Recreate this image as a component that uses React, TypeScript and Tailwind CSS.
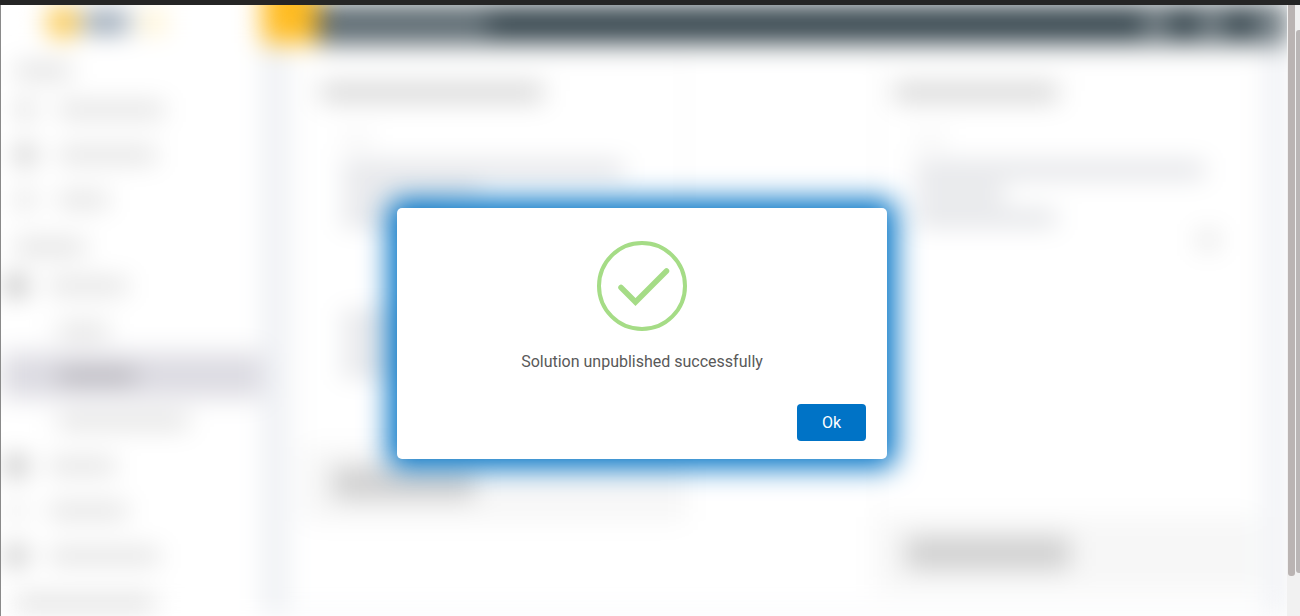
import React from 'react'

type NavRow = {
  kind: 'heading' | 'item' | 'group' | 'child'
  width: string
  icon?: string
  active?: boolean
}

const navRows: NavRow[] = [
  { kind: 'heading', width: 'w-14' },
  { kind: 'item', width: 'w-[106px]', icon: 'bg-[#cecece]' },
  { kind: 'item', width: 'w-[98px]', icon: 'bg-[#ababab]' },
  { kind: 'item', width: 'w-[50px]', icon: 'bg-[#d6d6d6]' },
  { kind: 'heading', width: 'w-[70px]' },
  { kind: 'group', width: 'w-[78px]', icon: 'bg-[#858585]' },
  { kind: 'child', width: 'w-[50px]' },
  { kind: 'child', width: 'w-[78px]', active: true },
  { kind: 'child', width: 'w-[130px]' },
  { kind: 'group', width: 'w-[66px]', icon: 'bg-[#8c8c8c]' },
  { kind: 'group', width: 'w-[78px]', icon: 'bg-[#e4e4e4]' },
  { kind: 'group', width: 'w-[110px]', icon: 'bg-[#9a9a9a]' },
  { kind: 'heading', width: 'w-[140px]' },
]

const SidebarRow: React.FC<{ row: NavRow }> = ({ row }) => {
  if (row.kind === 'heading') {
    return (
      <div className="flex h-[41px] shrink-0 items-center pt-2 pl-[14px]">
        <div className={`h-3 bg-[#d4d4d4] ${row.width}`} />
      </div>
    )
  }

  return (
    <div
      className={`flex h-[45px] shrink-0 items-center gap-6 ${row.active ? 'bg-[#dcdbe2]' : ''} ${
        row.kind === 'group' ? 'pl-[6px]' : 'pl-[15px]'
      }`}
    >
      <div className={`h-[18px] w-[18px] rounded-full ${row.icon ?? ''}`} />
      <div className={`h-3 ${row.active ? 'bg-[#aba9af]' : 'bg-[#d6d6d6]'} ${row.width}`} />
    </div>
  )
}

const Sidebar: React.FC = () => (
  <aside className="flex w-[261px] shrink-0 flex-col bg-white">
    {/* Logo */}
    <div className="flex h-[38px] shrink-0 items-center pb-1 pl-[46px]">
      <div className="h-8 w-8 rounded-full bg-[#fbc33c]" />
      <div className="ml-1 h-5 w-[46px] bg-[#8495a7]" />
      <div className="ml-3 h-5 w-6 bg-[#fff0c4]" />
    </div>
    <nav className="flex flex-col pt-[3px]">
      {navRows.map((row, i) => (
        <SidebarRow key={i} row={row} />
      ))}
    </nav>
  </aside>
)

const TopBar: React.FC = () => (
  <header className="flex h-[38px] shrink-0 items-center bg-[#34444c]">
    <div className="-mt-8 h-[70px] w-14 shrink-0 bg-[#ffbc22]" />
    <div className="ml-1 h-5 w-[166px] bg-[#6b787f]" />
    <div className="ml-auto flex items-center gap-[34px] pr-1">
      <div className="h-5 w-[22px] bg-[#8d979d]" />
      <div className="h-5 w-[22px] bg-[#8d979d]" />
      <div className="h-5 w-[26px] bg-[#8d979d]" />
    </div>
  </header>
)

type CardProps = {
  title: string
  button: string
  height: string
  children: React.ReactNode
}

const Card: React.FC<CardProps> = ({ title, button, height, children }) => (
  <section className={`flex flex-col self-start border border-[#e8e8e8] bg-white ${height}`}>
    <div className="px-4 pt-[21px]">
      <div className={`h-[15px] bg-[#cbcbcb] ${title}`} />
    </div>
    <div className="flex flex-1 flex-col gap-3 px-[38px] pt-[34px]">{children}</div>
    <div className="flex h-[72px] shrink-0 items-center bg-[#f7f7f7] px-7">
      <div className={`h-8 bg-[#cfcfcf] ${button}`} />
    </div>
  </section>
)

const Line: React.FC<{ width: string }> = ({ width }) => (
  <div className={`h-3 bg-[#d4d6db] ${width}`} />
)

const Content: React.FC = () => (
  <main className="flex min-h-0 flex-1 pr-5 pb-1 pl-[26px]">
    <div className="grid flex-1 grid-cols-2 gap-48 bg-white pt-5 pr-[10px] pl-4">
      <Card title="w-[222px]" button="w-[142px]" height="h-[457px]">
        <div className="mb-[6px] h-3 w-7 bg-[#f1f1f1]" />
        <Line width="w-[280px]" />
        <Line width="w-[136px]" />
        <Line width="w-[100px]" />
        <div className="h-[66px]" />
        <Line width="w-[100px]" />
        <Line width="w-[100px]" />
        <Line width="w-[100px]" />
      </Card>
      <Card title="w-[164px]" button="w-[164px]" height="h-[527px]">
        <div className="mb-[6px] h-3 w-7 bg-[#f1f1f1]" />
        <Line width="w-[288px]" />
        <Line width="w-[88px]" />
        <Line width="w-[140px]" />
        <div className="-mt-1 h-4 w-5 self-end bg-[#dfdfdf]" />
      </Card>
    </div>
  </main>
)

const SuccessDialog: React.FC = () => (
  <div
    role="dialog"
    aria-modal="true"
    aria-labelledby="dialog-message"
    className="flex w-[490px] max-w-full flex-col rounded-[5px] bg-white px-[21px] pt-[33px] pb-[18px] shadow-[0_0_28px_9px_#0073c6]"
  >
    <svg viewBox="0 0 90 90" className="h-[90px] w-[90px] self-center" fill="none" stroke="#a5dc86" aria-hidden="true">
      <circle cx="45" cy="45" r="43" strokeWidth="4" />
      <path d="M24 46.5 38.5 61 69.5 30" strokeWidth="5.5" strokeLinecap="round" />
    </svg>
    <p id="dialog-message" className="mt-[19px] text-center text-base leading-6 text-[#595959]">
      Solution unpublished successfully
    </p>
    <button
      type="button"
      className="mt-[30px] h-[37px] w-[69px] self-end rounded-[4px] bg-[#0073c6] text-base text-white"
    >
      Ok
    </button>
  </div>
)

export default function App() {
  return (
    <div className="flex h-screen flex-col overflow-hidden bg-white font-['Roboto',sans-serif]">
      <div className="h-[5px] shrink-0 bg-[#252525]" />
      <div className="flex min-h-0 flex-1">
        <div className="relative min-w-0 flex-1 overflow-hidden border-l border-[#8a8a8a]">
          {/* Page behind the dialog */}
          <div className="flex h-full bg-[#eef0f4] blur-[13px]" aria-hidden="true">
            <Sidebar />
            <div className="flex min-w-0 flex-1 flex-col">
              <TopBar />
              <Content />
            </div>
          </div>
          <div className="absolute inset-0 flex items-start justify-center pt-[203px] pr-1">
            <SuccessDialog />
          </div>
        </div>

        {/* Scrollbars: inner page, then window */}
        <div className="w-2 shrink-0 bg-[#f1f1f1] pb-10 pl-px">
          <div className="h-full rounded-b-[3px] bg-[#bab4b3]" />
        </div>
        <div className="w-[5px] shrink-0 bg-[#f1f1f1] pt-[25px] pb-[43px] pl-px">
          <div className="h-full rounded-l-[3px] bg-[#bab6b6]" />
        </div>
      </div>
    </div>
  )
}
